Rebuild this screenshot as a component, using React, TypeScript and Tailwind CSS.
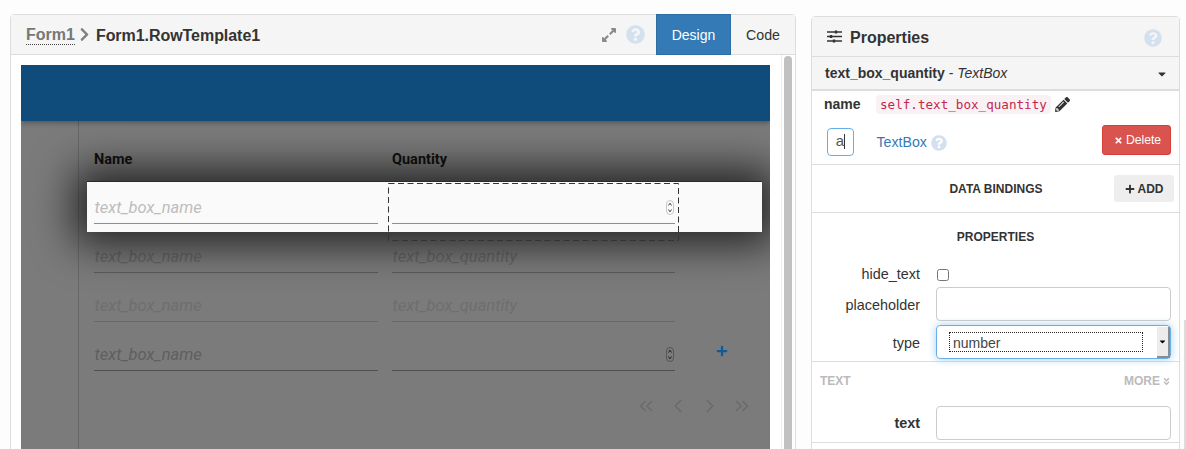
import React from "react";
import { FaChevronRight, FaExpandAlt, FaQuestionCircle, FaPencilAlt, FaPlus, FaTimes, FaCaretDown, FaAngleDoubleDown } from "react-icons/fa";
import { ChevronLeft, ChevronRight, ChevronsLeft, ChevronsRight } from "lucide-react";

const Spinner = ({ dark }: { dark?: boolean }) => (
  <svg width="8" height="15" viewBox="0 0 8 15" className="-mt-[2px] shrink-0">
    <rect x="0.5" y="0.5" width="7" height="14" rx="3.5" fill="none" stroke={dark ? "#555" : "#c8c8c8"} />
    <path d="M2.5 5.5 4 3.2 5.5 5.5M2.5 9.5 4 11.8 5.5 9.5" fill="none" stroke={dark ? "#222" : "#444"} strokeWidth="1" />
  </svg>
);

const Field = ({ text, line, color, spinner, dark, tall }: { text?: string; line: string; color: string; spinner?: boolean; dark?: boolean; tall?: boolean }) => (
  <div className={`flex items-center justify-between border-b pt-[11px] pr-[1px] text-[16.5px] italic ${tall ? "h-[42px]" : "h-[41px]"} ${line} ${color}`}>
    <span className="pl-[0.5px]">{text}</span>
    {spinner ? <Spinner dark={dark} /> : null}
  </div>
);

const Row = ({ q, line, color, active, plus, dark }: { q?: string; line: string; color: string; active?: boolean; plus?: boolean; dark?: boolean }) => (
  <div className={`relative ml-[8px] mr-[8px] flex w-[675px] pl-[7px] ${active ? "z-10 h-[51px] border-t border-[#2a2a2a] bg-[#fafafa] shadow-[0_0_42px_12px_rgba(0,0,0,0.72)]" : "h-[49px]"}`}>
    <div className="w-[284px]"><Field text="text_box_name" line={line} color={color} tall={active} /></div>
    <div className="ml-[14px] w-[283px]"><Field text={q} line={line} color={color} spinner={!q} dark={dark} tall={active} /></div>
    {plus ? <FaPlus className="ml-[41px] mt-[15px] text-[12px] text-[#0f5a9c]" /> : null}
    {active ? (
      <svg width="291" height="58" className="absolute left-[301px] top-[1px]">
        <rect x="0.5" y="0.5" width="290" height="57" fill="none" stroke="#333" strokeDasharray="6 3.5" />
      </svg>
    ) : null}
  </div>
);

const Label = ({ children, bold, lift }: { children: React.ReactNode; bold?: boolean; lift?: boolean }) => (
  <span className={`w-[108px] text-right text-[14.4px] leading-none text-[#333] ${bold ? "font-bold" : ""} ${lift ? "pt-[2px]" : ""}`}>{children}</span>
);

export default function App() {
  return (
    <div className="flex h-[449px] w-[1186px] overflow-hidden bg-[#fdfdfd] text-[#333] [font-family:'Liberation_Sans',Arial,sans-serif]">
      {/* Designer panel */}
      <div className="ml-[10px] mt-[14px] flex h-[470px] w-[786px] shrink-0 flex-col rounded-t-[4px] border border-[#dddddd] bg-white">
        <div className="flex h-[40px] shrink-0 items-center border-b border-[#dddddd] bg-[#f5f5f5] pl-[15px]">
          <span className="mt-[1px] border-b border-dotted border-[#444] text-[16px] font-bold leading-[18px] text-[#777]">Form1</span>
          <FaChevronRight className="ml-[2px] text-[15px] text-[#808080]" />
          <span className="ml-[4px] pt-[2px] text-[16px] font-bold tracking-[-0.05px] text-[#333]">Form1.RowTemplate1</span>
          <FaExpandAlt className="ml-auto text-[16px] text-[#8a8a8a]" />
          <FaQuestionCircle className="ml-[9px] text-[19px] text-[#d3e0ee]" />
          <div className="ml-[11px] flex h-[41px] w-[75px] items-center justify-center border border-[#2e6da4] bg-[#337ab7] pt-[1px] text-[14px] text-white">Design</div>
          <div className="flex h-[40px] w-[64px] items-center justify-center pt-[2px] text-[14.2px] text-[#333]">Code</div>
        </div>
        <div className="flex min-h-0 flex-1 pl-[10px] pt-[10px]">
          <div className="relative h-[400px] w-[749px] shrink-0 overflow-hidden bg-[#7b7b7b]">
            <div className="relative z-20 h-[56px] bg-[#104c7b] shadow-[0_2px_5px_rgba(0,0,0,0.3)]" />
            <div className="ml-[57px] h-full border-l border-[#686868]">
              <div className="flex h-[60px] items-end pb-[10px] text-[14.5px] font-bold text-[#111] [font-family:Roboto,sans-serif]">
                <span className="ml-[15px] w-[298px]">Name</span>
                <span>Quantity</span>
              </div>
              <div className="[font-family:Roboto,sans-serif]">
                <Row active line="border-[#8e8e8e]" color="text-[#bdbdbd]" />
                <Row q="text_box_quantity" line="border-[#5c5c5c]" color="text-[#666666]" />
                <Row q="text_box_quantity" line="border-[#686868]" color="text-[#6e6e6e]" />
                <Row plus dark line="border-[#505050]" color="text-[#5f5f5f]" />
              </div>
              <div className="ml-[556px] mt-[16px] flex w-[118px] justify-between text-[#6a6a6a]">
                <ChevronsLeft size={22} strokeWidth={1.6} />
                <ChevronLeft size={22} strokeWidth={1.6} />
                <ChevronRight size={22} strokeWidth={1.6} />
                <ChevronsRight size={22} strokeWidth={1.6} />
              </div>
            </div>
          </div>
          <div className="-mt-[10px] ml-[11px] w-[15px] border-l border-[#ececec] pl-[2px] pt-[1px]">
            <div className="h-full w-[8px] rounded-t-[4px] bg-[#c1c1c1]" />
          </div>
        </div>
      </div>

      {/* Properties panel */}
      <div className="ml-[15px] mt-[16px] flex h-[470px] w-[369px] shrink-0 flex-col rounded-t-[4px] border border-[#dddddd] bg-white">
        <div className="flex h-[40px] shrink-0 items-center border-b border-[#dddddd] bg-[#f5f5f5] pl-[15px] pr-[17px]">
          <svg width="15" height="13" viewBox="0 0 15 13" fill="none" stroke="#333" strokeWidth="1.4">
            <path d="M0 2h15M0 6.5h15M0 11h15" />
            <path d="M9 .5v3M4 5v3M7 9.5v3" strokeWidth="2.4" />
          </svg>
          <span className="ml-[8px] pt-[2px] text-[16px] font-bold">Properties</span>
          <FaQuestionCircle className="ml-auto mt-[2px] text-[18px] text-[#d3e0ee]" />
        </div>
        <div className="flex h-[34px] shrink-0 items-center justify-between border-b-2 border-[#dddddd] bg-[#f5f5f5] pl-[13px] pr-[11px] pt-[1px] text-[14px]">
          <span><b>text_box_quantity</b> - <i>TextBox</i></span>
          <FaCaretDown className="text-[12px]" />
        </div>
        <div className="flex h-[27px] shrink-0 items-center pl-[12px]">
          <span className="w-[52px] text-[14px] font-bold">name</span>
          <code className="rounded-[4px] bg-[#f9f2f4] px-[4px] text-[12.6px] leading-[19px] text-[#c7254e] [font-family:'DejaVu_Sans_Mono','Liberation_Mono',monospace]">self.text_box_quantity</code>
          <FaPencilAlt className="ml-[4px] text-[15px] text-[#333]" />
        </div>
        <div className="flex h-[47px] shrink-0 items-center border-b border-[#dddddd] pt-[1px] pl-[15px] pr-[8px]">
          <div className="flex h-[28px] w-[27px] items-center justify-center rounded-[4px] border border-[#66afe9] text-[15px] text-[#555]">a<span className="h-[15px] w-px bg-[#333]" /></div>
          <span className="ml-[22.5px] pt-[3px] text-[14.2px] text-[#337ab7]">TextBox</span>
          <FaQuestionCircle className="ml-[4px] mt-[2px] text-[16px] text-[#d3e0ee]" />
          <div className="-mt-[3px] ml-auto flex h-[30px] w-[69px] items-center justify-center gap-[3px] rounded-[3px] border border-[#d43f3a] bg-[#d9534f] pl-[2px] text-[12.2px] text-white">
            <FaTimes className="text-[9px]" />Delete
          </div>
        </div>
        <div className="relative flex h-[48px] shrink-0 items-center justify-center border-b border-[#dddddd] text-[12px] font-bold">
          <span className="ml-[1px]">DATA BINDINGS</span>
          <div className="absolute left-[302px] top-[10px] flex h-[27px] w-[60px] items-center justify-center gap-[3px] rounded-[3px] bg-[#eeeeee] text-[12px] font-bold">
            <FaPlus className="text-[10px]" />ADD
          </div>
        </div>
        <div className="flex h-[149px] shrink-0 flex-col border-b border-[#dddddd]">
          <div className="pt-[17px] text-center text-[12px] font-bold leading-[14px]">PROPERTIES</div>
          <div className="mt-[24px] flex h-[12px] items-center">
            <Label>hide_text</Label>
            <span className="ml-[17px] mt-[1px] h-[12px] w-[12px] rounded-[2.5px] border border-[#767676] bg-white" />
          </div>
          <div className="mt-[7px] flex items-center">
            <Label lift>placeholder</Label>
            <div className="ml-[16px] h-[34px] w-[235px] rounded-[4px] border border-[#cccccc]" />
          </div>
          <div className="mt-[4px] flex items-center">
            <Label lift>type</Label>
            <div className="ml-[16px] flex h-[34px] w-[235px] items-center rounded-[4px] border border-[#66afe9] pl-[12px] shadow-[0_0_8px_rgba(102,175,233,0.6)]">
              <span className="flex h-[20px] w-[194px] items-center border border-dotted border-[#222] pl-[3px] pt-[2px] text-[14px] text-[#444]">number</span>
              <div className="ml-auto flex h-[31px] w-[13px] items-center justify-center border-b-2 border-r-2 border-[#8d8d8d] bg-[#ececec]">
                <FaCaretDown className="text-[9px] text-black" />
              </div>
            </div>
          </div>
        </div>
        <div className="flex h-[81px] shrink-0 flex-col border-b border-[#dddddd]">
          <div className="flex h-[38px] items-center justify-between pl-[8px] pr-[8px] text-[12px] font-bold text-[#bbbbbb]">
            <span>TEXT</span>
            <span className="flex items-center gap-[2px]">MORE<FaAngleDoubleDown className="text-[9px]" /></span>
          </div>
          <div className="mt-[6px] flex items-center">
            <Label bold>text</Label>
            <div className="ml-[16px] h-[34px] w-[235px] rounded-[4px] border border-[#cccccc]" />
          </div>
        </div>
      </div>

      <div className="ml-[4px] mt-[320px] h-[129px] w-[2px] bg-[#dcdcdc]" />
    </div>
  );
}
